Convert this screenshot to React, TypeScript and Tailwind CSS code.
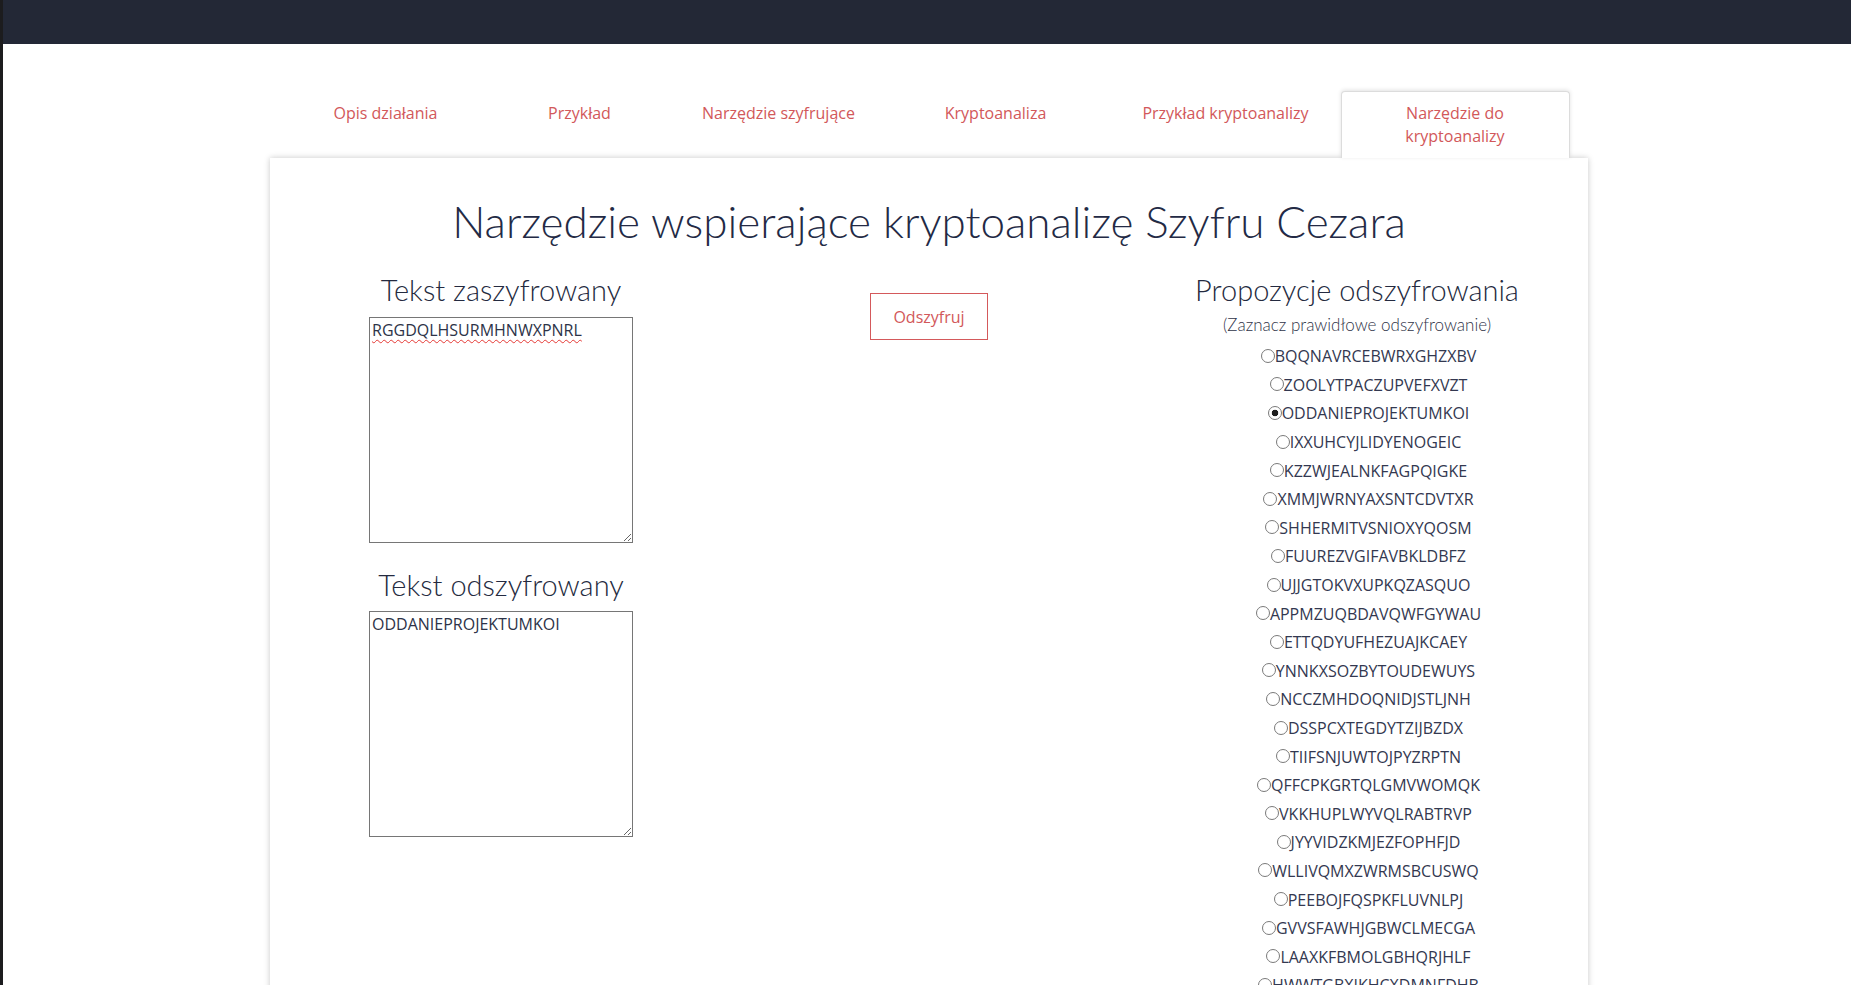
import { useState } from "react";

const tabs = [
  { label: "Opis działania", width: "w-[194px]" },
  { label: "Przykład", width: "w-[194px]" },
  { label: "Narzędzie szyfrujące", width: "w-[204px]" },
  { label: "Kryptoanaliza", width: "w-[230px]" },
  { label: "Przykład kryptoanalizy", width: "w-[230px]" },
  { label: "Narzędzie do kryptoanalizy", width: "w-[229px]", active: true },
];

const plain = "ODDANIEPROJEKTUMKOI";
// order of shifts as the tool lists them
const shifts = [13, 11, 0, 20, 22, 9, 4, 17, 6, 12, 16, 10, 25, 15, 5, 2, 7, 21, 8, 1, 18, 23, 19, 3, 14, 24];

function shift(text: string, n: number) {
  return text
    .split("")
    .map((c) => String.fromCharCode(((c.charCodeAt(0) - 65 + n) % 26) + 65))
    .join("");
}

const heading = "font-['Lato',sans-serif] font-light text-[29px] leading-[34px] text-[#242a40]";

export default function App() {
  const [picked, setPicked] = useState(0);

  return (
    <div className="flex min-h-screen bg-white font-['Open_Sans',sans-serif]">
      <div className="w-[3px] shrink-0 bg-[#1c1c1e]" />
      <div className="min-w-0 flex-1">
        <header className="h-[44px] bg-[#232836]" />

        <main className="pl-[4px] pt-[47px]">
          <nav className="mx-auto flex w-[1281px] items-start">
            {tabs.map((tab) => (
              <div
                key={tab.label}
                className={
                  tab.active
                    ? `${tab.width} relative z-10 h-[67px] rounded-t-[4px] border border-b-0 border-[#dcdcdc] bg-white px-[30px] pt-[10px] text-center text-[16px] leading-[22.5px] text-[#d2585a] shadow-[0_-1px_4px_rgba(0,0,0,0.12)]`
                    : `${tab.width} px-[10px] pt-[11px] text-center text-[16px] leading-[22.5px] text-[#d2585a]`
                }
              >
                {tab.label}
              </div>
            ))}
          </nav>

          <section className="mx-auto w-[1318px] bg-white px-[17px] pb-[60px] pt-[39px] shadow-[0_0_6px_rgba(0,0,0,0.22)]">
            <h1 className="text-center font-['Lato',sans-serif] text-[44px] font-light leading-[48px] text-[#232a45]">
              Narzędzie wspierające kryptoanalizę Szyfru Cezara
            </h1>

            <div className="mt-[28px] grid grid-cols-3">
              <div className="flex flex-col items-center">
                <h3 className={heading}>Tekst zaszyfrowany</h3>
                <textarea
                  defaultValue="RGGDQLHSURMHNWXPNRL"
                  spellCheck={false}
                  className="mt-[10px] h-[226px] w-[264px] border border-[#767676] px-[2px] py-[1px] text-[16px] leading-[22px] text-[#2d3348] underline decoration-[#e53935] decoration-wavy decoration-1 underline-offset-[3px] outline-none"
                />
                <h3 className={`${heading} mt-[25px]`}>Tekst odszyfrowany</h3>
                <textarea
                  defaultValue={plain}
                  spellCheck={false}
                  className="mt-[9px] h-[226px] w-[264px] border border-[#767676] px-[2px] py-[1px] text-[16px] leading-[22px] text-[#2d3348] outline-none"
                />
              </div>

              <div className="flex flex-col items-center">
                <button className="mt-[20px] h-[47px] w-[118px] border border-[#d4595b] bg-white text-[16px] text-[#d2585a]">
                  Odszyfruj
                </button>
              </div>

              <div className="flex flex-col items-center">
                <h3 className={heading}>Propozycje odszyfrowania</h3>
                <p className="mt-[6px] font-['Lato',sans-serif] text-[17px] font-light leading-[24px] text-[#2f3448]">
                  (Zaznacz prawidłowe odszyfrowanie)
                </p>
                <div className="mt-[5px] flex flex-col items-center pl-[18px]">
                  {shifts.map((n) => (
                    <label
                      key={n}
                      className="flex h-[28.6px] items-center text-[16px] text-[#333850]"
                    >
                      <input
                        type="radio"
                        name="guess"
                        checked={picked === n}
                        onChange={() => setPicked(n)}
                        className="mb-[1px] ml-[5px] h-[14px] w-[14px] shrink-0 appearance-none rounded-full border border-[#7a7a7a] bg-white checked:bg-[radial-gradient(circle,#1e1e1e_0_3px,#fff_3.6px)]"
                      />
                      <span>{shift(plain, n)}</span>
                    </label>
                  ))}
                </div>
              </div>
            </div>
          </section>
        </main>
      </div>
    </div>
  );
}
